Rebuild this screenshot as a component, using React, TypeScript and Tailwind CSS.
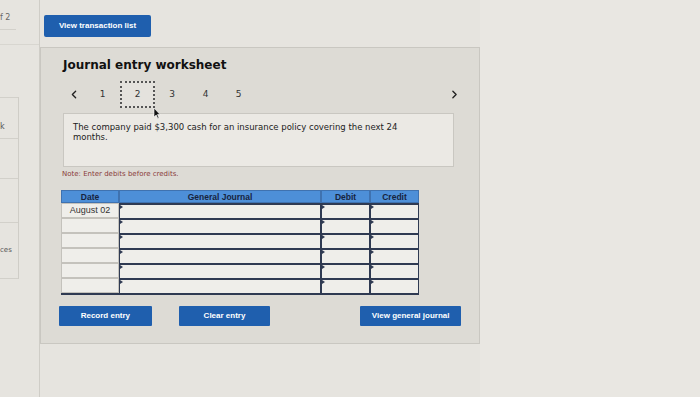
import React from 'react';
import { ChevronLeft, ChevronRight } from 'lucide-react';

const cols = ['w-[58px]', 'w-[202px]', 'w-[49px]', 'w-[49px]'];

function InputCell({ w }: { w: string }) {
  return (
    <div className={`${w} relative h-full border-x border-t-2 border-[#2f3a52] bg-[#efeeea]`}>
      <div className="absolute left-0 top-0 h-0 w-0 border-y-[2px] border-l-[3px] border-y-transparent border-l-[#2f3a52]" />
    </div>
  );
}

function Row({ date }: { date?: string }) {
  return (
    <div className="flex h-[15px]">
      <div className="flex w-[58px] items-center justify-center border border-[#c4c2bc] bg-[#efeeea] text-[9px] text-[#333] [font-family:'Liberation_Sans',sans-serif]">
        {date}
      </div>
      <InputCell w={cols[1]} />
      <InputCell w={cols[2]} />
      <InputCell w={cols[3]} />
    </div>
  );
}

export default function App() {
  return (
    <div className="flex h-[397px] w-[700px] overflow-hidden bg-[#e6e4df] [font-family:'DejaVu_Sans',sans-serif]">
      {/* Left strip */}
      <div className="flex w-[40px] shrink-0 flex-col border-r border-[#cfcdc7]">
        <div className="pt-[13px] text-[8px] leading-[10px] text-[#666]">f 2</div>
        <div className="mt-[6px] h-px w-[16px] bg-[#d2d0ca]" />
        <div className="mt-[14px] h-px w-full bg-[#d8d6d0]" />
        <div className="mt-[52px] flex w-[19px] flex-col border-r border-[#cfcdc7]">
          <div className="flex h-[42px] items-center border-y border-[#d2d0ca] pt-[18px] text-[8px] text-[#555]">k</div>
          <div className="h-[40px] border-b border-[#d2d0ca]" />
          <div className="h-[44px] border-b border-[#d2d0ca]" />
          <div className="flex h-[56px] items-center border-b border-[#d2d0ca] text-[7px] text-[#555]">ces</div>
        </div>
      </div>

      {/* Main column */}
      <div className="flex flex-col">
        <button className="ml-[4px] mt-[15px] h-[22px] w-[107px] rounded-[2px] bg-[#1f5fae] text-[8px] font-bold text-white [font-family:'Liberation_Sans',sans-serif]">
          View transaction list
        </button>

        <div className="mt-[10px] w-[440px] border border-[#c9c7c1] bg-[#dddbd5] pb-[17px] pl-[22px] pr-[18px] pt-[9px]">
          <h1 className="text-[12px] font-bold leading-[16px] text-[#111]">Journal entry worksheet</h1>

          {/* Pager */}
          <div className="mt-[8px] flex h-[27px] items-center text-[9px] text-[#333]">
            <ChevronLeft className="w-[22px] text-[#222]" size={13} strokeWidth={2.5} />
            <div className="w-[35px] text-center">1</div>
            <div className="relative flex h-[27px] w-[35px] items-center justify-center border-2 border-dotted border-[#555] bg-[#e4e2dd]">
              2
              <svg className="absolute -bottom-[13px] -right-[8px]" width="8" height="12" viewBox="0 0 8 12">
                <path d="M1 1 L1 10 L3.2 8 L4.8 11.5 L6 11 L4.5 7.5 L7 7.5 Z" fill="#111" stroke="#fff" strokeWidth="0.6" />
              </svg>
            </div>
            <div className="w-[34px] text-center">3</div>
            <div className="w-[33px] text-center">4</div>
            <div className="w-[33px] text-center">5</div>
            <ChevronRight className="ml-auto text-[#222]" size={13} strokeWidth={2.5} />
          </div>

          {/* Description */}
          <div className="mt-[5px] h-[54px] w-[391px] border border-[#c9c7c1] bg-[#ebe9e4] pl-[9px] pr-[40px] pt-[8px] text-[8.5px] leading-[10px] text-[#222]">
            The company paid $3,300 cash for an insurance policy covering the next 24 months.
          </div>

          <div className="-ml-[1px] mt-[2px] text-[7px] leading-[10px] text-[#8a3b3b]">Note: Enter debits before credits.</div>

          {/* Table */}
          <div className="-ml-[2px] mt-[11px] flex w-[358px] flex-col border-b-2 border-[#2f3a52]">
            <div className="flex h-[13px] bg-[#4d8fd8] text-[8.5px] font-bold leading-[12px] text-[#17233d] [font-family:'Liberation_Sans',sans-serif]">
              <div className="w-[58px] border border-[#3f72b0] text-center">Date</div>
              <div className="w-[202px] border border-[#3f72b0] text-center">General Journal</div>
              <div className="w-[49px] border border-[#3f72b0] text-center">Debit</div>
              <div className="w-[49px] border border-[#3f72b0] text-center">Credit</div>
            </div>
            <Row date="August 02" />
            <Row />
            <Row />
            <Row />
            <Row />
            <Row />
          </div>

          {/* Buttons */}
          <div className="-ml-[4px] mt-[11px] flex h-[20px] text-[8px] font-bold text-white [font-family:'Liberation_Sans',sans-serif]">
            <button className="w-[93px] rounded-[1px] bg-[#1f5fae]">Record entry</button>
            <button className="ml-[27px] w-[92px] rounded-[1px] bg-[#1f5fae]">Clear entry</button>
            <button className="ml-[90px] w-[101px] rounded-[1px] bg-[#1f5fae]">View general journal</button>
          </div>
        </div>
      </div>

      <div className="flex-1 bg-[#e9e7e2]" />
    </div>
  );
}
